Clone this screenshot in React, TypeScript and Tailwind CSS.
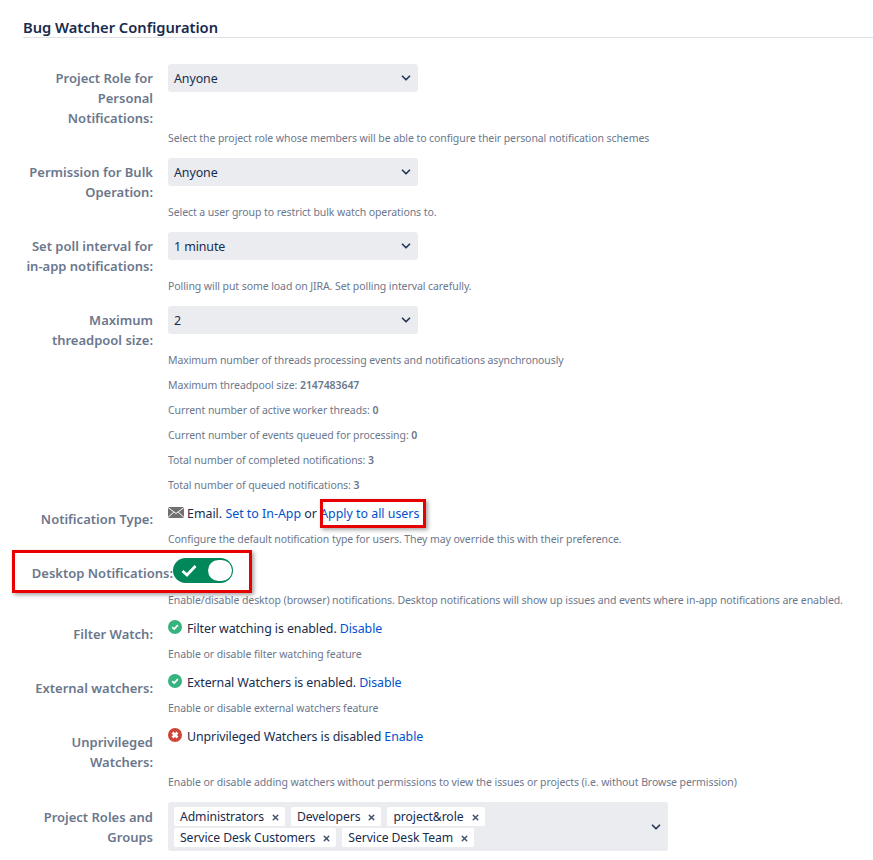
import React from 'react';
import { ChevronDown, X } from 'lucide-react';

const Link = ({ children }: { children: React.ReactNode }) => (
  <a className="text-[#0052cc]">{children}</a>
);

const Help = ({ children }: { children: React.ReactNode }) => (
  <div className="h-5 leading-5 text-[10.5px] tracking-[-0.08px] text-[#6b778c] whitespace-nowrap">{children}</div>
);

const Stat = ({ label, value }: { label: string; value: string }) => (
  <div className="h-5 mt-[5px] leading-5 text-[10.5px] tracking-[-0.08px] text-[#6b778c] whitespace-nowrap">
    {label} <b className="font-semibold">{value}</b>
  </div>
);

const Select = ({ value }: { value: string }) => (
  <div className="w-[250px] h-[28px] rounded-[3px] bg-[#ebecf0] flex items-center justify-between pl-[6px] pr-[5px] text-[12.4px] tracking-[-0.08px] text-[#172b4d]">
    <span className="pt-[2px]">{value}</span>
    <ChevronDown size={14} strokeWidth={3} className="text-[#253858]" />
  </div>
);

const Row = ({ label, children, help }: { label: React.ReactNode; children: React.ReactNode; help?: React.ReactNode }) => (
  <div className="grid grid-cols-[130px_1fr] gap-x-[15px] mb-[10px]">
    <div className="pt-1 text-right font-semibold text-[13px] text-[#6b778c] leading-5">{label}</div>
    <div>{children}</div>
    {help && <div className="col-start-2">{help}</div>}
  </div>
);

const StatusLine = ({ children }: { children: React.ReactNode }) => (
  <div className="-mt-[1px] h-5 leading-5 flex items-center gap-[5px] text-[12.4px] tracking-[-0.08px] text-[#172b4d] whitespace-nowrap">{children}</div>
);

const GreenCheck = () => (
  <svg width="14" height="14" viewBox="0 0 14 14" className="shrink-0 -mt-[5px]">
    <circle cx="7" cy="7" r="7" fill="#36b37e" />
    <path d="M4.2 7.2 6.2 9.1 9.9 5.2" fill="none" stroke="#fff" strokeWidth="1.8" />
  </svg>
);

const RedCross = () => (
  <svg width="14" height="14" viewBox="0 0 14 14" className="shrink-0 -mt-[5px]">
    <circle cx="7" cy="7" r="7" fill="#d04437" />
    <path d="M4.5 4.5 9.5 9.5M9.5 4.5 4.5 9.5" fill="none" stroke="#fff" strokeWidth="2.6" />
  </svg>
);

const Envelope = () => (
  <svg width="16" height="11" viewBox="0 0 16 11" className="shrink-0 -mt-[4px] -mr-[2px]">
    <rect width="16" height="11" fill="#707070" />
    <path d="M0 .5 8 6.5l8-6M0 10.5 5.8 5M16 10.5 10.2 5" fill="none" stroke="#fff" strokeWidth="1" />
  </svg>
);

const Tag = ({ children }: { children: string }) => (
  <span className="h-[19px] pt-[2px] pl-[6px] pr-[5px] rounded-[2px] bg-white flex items-center gap-[7px] text-[12.2px] tracking-[-0.08px] text-[#172b4d] whitespace-nowrap">
    {children}
    <X size={9} strokeWidth={4} className="text-[#42526e]" />
  </span>
);

export default function App() {
  return (
    <div className="relative w-[873px] h-[860px] overflow-hidden bg-white pl-[23px] pt-[17px] text-[13px] font-['Noto_Sans',sans-serif]">
      <h2 className="h-[20px] leading-5 text-[14.7px] font-semibold text-[#172b4d] border-b border-[#dfe1e6] box-content">
        Bug Watcher Configuration
      </h2>
      <div className="mt-[26px]">
        <Row
          label={<>Project Role for<br />Personal<br />Notifications:</>}
          help={<Help>Select the project role whose members will be able to configure their personal notification schemes</Help>}
        >
          <Select value="Anyone" />
        </Row>
        <Row
          label={<>Permission for Bulk<br />Operation:</>}
          help={<Help>Select a user group to restrict bulk watch operations to.</Help>}
        >
          <Select value="Anyone" />
        </Row>
        <Row
          label={<>Set poll interval for<br />in-app notifications:</>}
          help={<Help>Polling will put some load on JIRA. Set polling interval carefully.</Help>}
        >
          <Select value="1 minute" />
        </Row>
        <Row
          label={<>Maximum<br />threadpool size:</>}
          help={
            <>
              <Help>Maximum number of threads processing events and notifications asynchronously</Help>
              <Stat label="Maximum threadpool size:" value="2147483647" />
              <Stat label="Current number of active worker threads:" value="0" />
              <Stat label="Current number of events queued for processing:" value="0" />
              <Stat label="Total number of completed notifications:" value="3" />
              <Stat label="Total number of queued notifications:" value="3" />
            </>
          }
        >
          <Select value="2" />
        </Row>
        <Row
          label="Notification Type:"
          help={<Help>Configure the default notification type for users. They may override this with their preference.</Help>}
        >
          <StatusLine>
            <Envelope />
            <span className="tracking-normal">Email. <Link>Set to In-App</Link> or <Link>Apply to all users</Link></span>
          </StatusLine>
        </Row>
        <Row
          label={<span className="block -mr-[20px] whitespace-nowrap">Desktop Notifications:</span>}
          help={<Help>Enable/disable desktop (browser) notifications. Desktop notifications will show up issues and events where in-app notifications are enabled.</Help>}
        >
          <div className="h-[32px]">
            <div className="ml-[5px] -mt-[1px] w-[60px] h-[25px] rounded-full bg-[#00875a] flex items-center justify-between pl-[8px] pr-[1px]">
              <svg width="16" height="13" viewBox="0 0 16 13">
                <path d="M1.5 7 6 11 14.5 2" fill="none" stroke="#fff" strokeWidth="2.8" />
              </svg>
              <span className="w-[24px] h-[21px] rounded-full bg-white" />
            </div>
          </div>
        </Row>
        <Row label="Filter Watch:" help={<Help>Enable or disable filter watching feature</Help>}>
          <StatusLine>
            <GreenCheck />
            <span>Filter watching is enabled. <Link>Disable</Link></span>
          </StatusLine>
        </Row>
        <Row label="External watchers:" help={<Help>Enable or disable external watchers feature</Help>}>
          <StatusLine>
            <GreenCheck />
            <span>External Watchers is enabled. <Link>Disable</Link></span>
          </StatusLine>
        </Row>
        <Row
          label={<>Unprivileged<br />Watchers:</>}
          help={<Help>Enable or disable adding watchers without permissions to view the issues or projects (i.e. without Browse permission)</Help>}
        >
          <StatusLine>
            <RedCross />
            <span>Unprivileged Watchers is disabled <Link>Enable</Link></span>
          </StatusLine>
        </Row>
        <Row label={<span className="block mt-[1px]">Project Roles and<br />Groups</span>}>
          <div className="w-[500px] h-[49px] rounded-[3px] bg-[#ebecf0] flex items-center justify-between pl-[6px] pr-[5px]">
            <div className="flex flex-wrap gap-x-[6px] gap-y-[2px] w-[440px]">
              <Tag>Administrators</Tag>
              <Tag>Developers</Tag>
              <Tag>project&amp;role</Tag>
              <Tag>Service Desk Customers</Tag>
              <Tag>Service Desk Team</Tag>
            </div>
            <ChevronDown size={14} strokeWidth={3} className="text-[#253858]" />
          </div>
        </Row>
      </div>
      {/* red annotation boxes drawn over the screenshot */}
      <div className="absolute left-[320px] top-[499px] w-[106px] h-[29px] border-[3px] border-[#e60000] shadow-[2px_2px_4px_rgba(0,0,0,0.35)]" />
      <div className="absolute left-[12px] top-[550px] w-[240px] h-[43px] border-[3px] border-[#e60000] shadow-[2px_2px_4px_rgba(0,0,0,0.35)]" />
    </div>
  );
}
